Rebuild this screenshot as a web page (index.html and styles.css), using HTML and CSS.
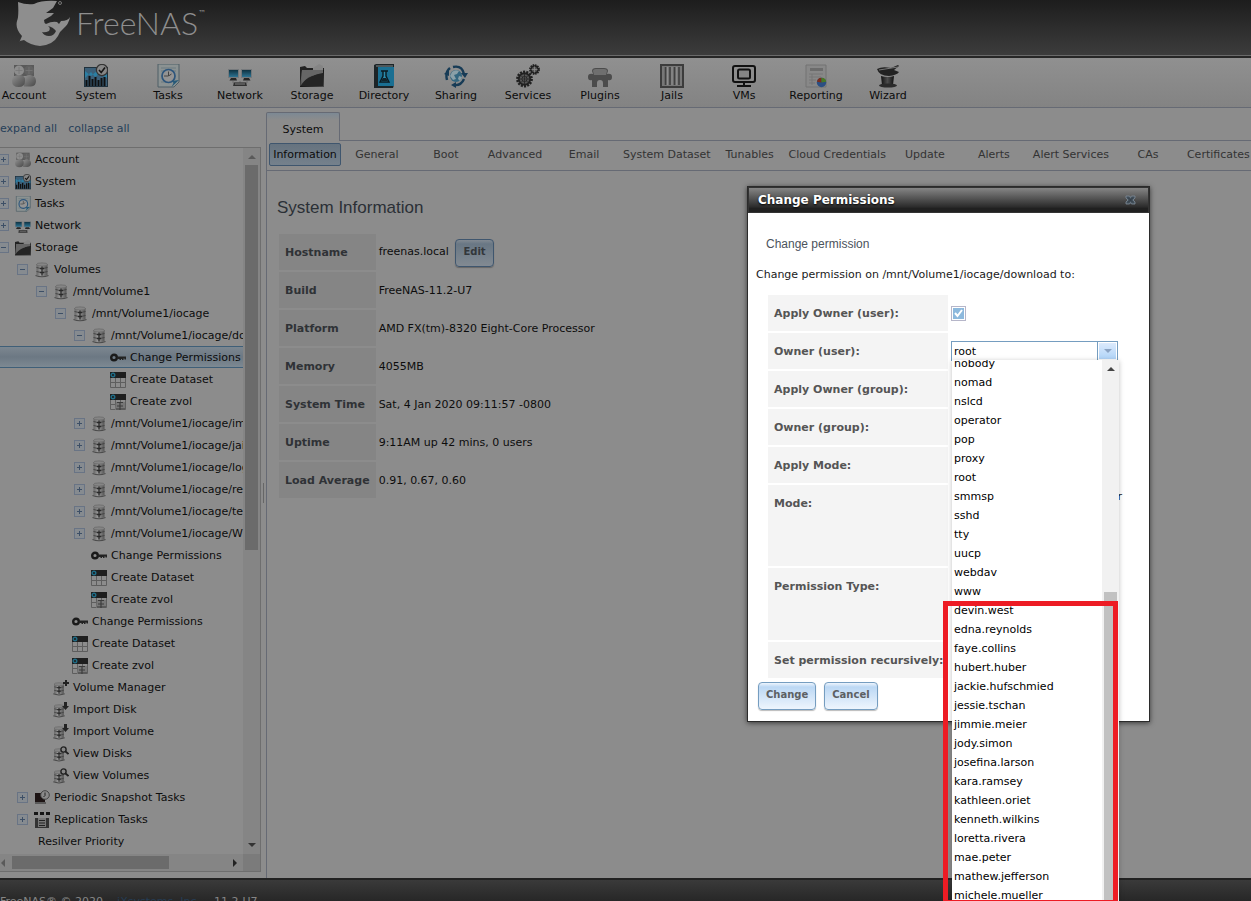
FILE: index.html
```html
<!DOCTYPE html>
<html lang="en">
<head>
<meta charset="utf-8">
<title>FreeNAS - System Information</title>
<link rel="stylesheet" href="styles.css">
</head>
<body>
<svg class="sprite" aria-hidden="true">
  <defs>
    <linearGradient id="g-blue" x1="0" y1="0" x2="0" y2="1"><stop offset="0" stop-color="#0e3242"/><stop offset="1" stop-color="#2c7392"/></linearGradient>
    <linearGradient id="g-folder" x1="0" y1="0" x2="1" y2="1"><stop offset="0" stop-color="#777"/><stop offset=".45" stop-color="#555"/><stop offset=".5" stop-color="#151515"/><stop offset="1" stop-color="#4b4b4b"/></linearGradient>
    <linearGradient id="g-hat" x1="0" y1="0" x2="1" y2="0"><stop offset="0" stop-color="#111"/><stop offset=".5" stop-color="#4c4c4c"/><stop offset="1" stop-color="#111"/></linearGradient>
    <linearGradient id="g-drum" x1="0" y1="0" x2="1" y2="0"><stop offset="0" stop-color="#666"/><stop offset=".4" stop-color="#9a9a9a"/><stop offset="1" stop-color="#555"/></linearGradient>
    <linearGradient id="g-person" x1="0" y1="0" x2="1" y2="1"><stop offset="0" stop-color="#919191"/><stop offset="1" stop-color="#484848"/></linearGradient>
  </defs>
  <symbol id="i-account" viewBox="0 0 24 24">
    <path d="M2 1h20v11H2z" fill="#5a5a5a"/>
    <circle cx="17" cy="6.500" r="5" fill="#626262"/><path d="M12 15q1-4 6-4 6 1 6 6 0 5-5 5.500h-7z" fill="url(#g-person)"/>
    <circle cx="7" cy="6.500" r="5" fill="#8d8d8d"/><path d="M0 17q0-6 7-6t6 6q0 6-6.500 6T0 17z" fill="url(#g-person)"/>
    <path d="M7 3v7M3.500 6.500h7M17 3v7M13.500 6.500h7" stroke="#777" stroke-width=".8"/>
  </symbol>
  <symbol id="i-system" viewBox="0 0 24 24">
    <path d="M0 3h24v20H0z" fill="#20313c"/><path d="M1 4h22v18H1z" fill="#3b5f78"/>
    <path d="M1 14l6-6 4 5 4-3 8 4V9L15 5 7 12 1 7z" fill="#2b7fa3"/>
    <path d="M2.500 22v-6M5.500 22v-10M8.500 22v-7M11.500 22v-9M14.500 22v-6M17.500 22v-8M20.500 22v-9" stroke="#101010" stroke-width="2"/>
    <circle cx="18" cy="6" r="5.600" fill="#868686" stroke="#333" stroke-width="1.200"/><path d="M15 6l2.200 2.500L21 3.500" fill="none" stroke="#161616" stroke-width="1.600"/>
  </symbol>
  <symbol id="i-tasks" viewBox="0 0 24 24">
    <path d="M2 0h21v18l-5 5H2z" fill="#8b9292" stroke="#4f5f66" stroke-width="1"/><path d="M5 4h15M5 18h8M5 7h3M17 7h3" stroke="#6d7a80" stroke-width="1"/>
    <circle cx="12.500" cy="12" r="6.500" fill="#939393" stroke="#2d557c" stroke-width="1.700"/><path d="M12.500 7.500V12l3-2M8 12h4" fill="none" stroke="#444" stroke-width="1"/>
    <path d="M23 16l-7 1 1.500 2-2 4z" fill="#285a78"/>
  </symbol>
  <symbol id="i-network" viewBox="0 0 24 24">
    <path d="M0 5h11v9H0zM13 5h11v9H13z" fill="#75797c"/><path d="M1 6h9v7H1zM14 6h9v7h-9z" fill="url(#g-blue)"/>
    <path d="M3 14h5l1 2.500H1.500zM16 14h5l1.500 2.500H15z" fill="#262626"/><path d="M5 17v2h14v-2M12 17v4" fill="none" stroke="#6c6c6c" stroke-width="1"/>
    <path d="M6 18.500h12l1 3.500H5z" fill="#303030"/><path d="M7 20h10" stroke="#808080"/>
  </symbol>
  <symbol id="i-storage" viewBox="0 0 24 24">
    <path d="M0 3l5-1 2 2h17v19H0z" fill="#222"/><path d="M13 4l6-4 4 2v5H13z" fill="#858585"/><path d="M2 6h22v17H0z" fill="url(#g-folder)"/><path d="M1 22Q5 12 23 9v13z" fill="#242424"/><path d="M2 6h21v3Q8 11 2 19z" fill="#666"/>
  </symbol>
  <symbol id="i-directory" viewBox="0 0 24 24">
    <path d="M2 1l2-1h18v21l-1 3H2z" fill="#1c2427"/><path d="M6 3h16v19H6z" fill="#1a6f92"/><path d="M4 2h17" stroke="#7e8a8e"/><path d="M9 7h7M11 7v5l-3 6h9l-3-6V7" fill="#2b8cae" stroke="#0c1a20" stroke-width="1.400"/><path d="M9 17l2-3h3l2 3z" fill="#10242c"/>
  </symbol>
  <symbol id="i-sharing" viewBox="0 0 24 24">
    <circle cx="12" cy="12" r="6" fill="#33667f"/><path d="M8 8q3-3 7-1l-2 3-3 1 2 4-3 1-3-4zM15 12l3 1-2 4-2-2z" fill="#8aa0a8"/>
    <path d="M9 3q9-2 11 7M20 15q-3 7-10 6M3 16Q1 8 6 4" fill="none" stroke="#173b56" stroke-width="2.400"/><path d="M17 9h7l-3 5zM12 18v6l-5-3zM0 10l5-4v6z" fill="#173b56"/>
  </symbol>
  <symbol id="i-services" viewBox="0 0 24 24">
    <circle cx="8.500" cy="15" r="7" fill="#555" stroke="#202020" stroke-width="2.800" stroke-dasharray="2 1.140"/><circle cx="8.500" cy="15" r="5.600" fill="none" stroke="#202020" stroke-width="1.600"/><circle cx="8.500" cy="15" r="2.500" fill="#8a8a8a" stroke="#222"/><path d="M8.500 10v10M3.500 15h10M5 11.500l7 7M12 11.500l-7 7" stroke="#282828" stroke-width=".9"/>
    <circle cx="18.500" cy="5.500" r="4.400" fill="#555" stroke="#202020" stroke-width="2" stroke-dasharray="1.500 .8"/><circle cx="18.500" cy="5.500" r="3.300" fill="#555" stroke="#202020" stroke-width="1.200"/><path d="M18.500 2.500v6M15.500 5.500h6" stroke="#8a8a8a" stroke-width=".8"/>
  </symbol>
  <symbol id="i-plugins" viewBox="0 0 24 24">
    <path d="M4 7q0-3 4-3h8q4 0 4 3l-1 3q5-1 5 3t-4 3v7h-5v-4q0-3-3-3t-3 3v4H4v-7q-4 1-4-3t5-3z" fill="#4c4c4c"/><path d="M5 7q0-2 3-2h8q3 0 3 2l-1 4H6z" fill="#6f6f6f"/>
  </symbol>
  <symbol id="i-jails" viewBox="0 0 24 24">
    <path d="M1 1h22v22H1z" fill="#777" stroke="#3c3c3c" stroke-width="2"/><path d="M5.500 3v18M10 3v18M14.500 3v18M19 3v18" stroke="#404040" stroke-width="1.600"/><path d="M7.500 3v18M12 3v18M16.700 3v18" stroke="#8f8f8f" stroke-width="1"/>
  </symbol>
  <symbol id="i-vms" viewBox="0 0 24 24">
    <rect x="1" y="2" width="22" height="16" rx="2" fill="none" stroke="#111" stroke-width="2"/><rect x="6" y="5.500" width="12" height="9" rx="1.500" fill="#858585" stroke="#111" stroke-width="2"/><path d="M12 18v3M5 22h14" stroke="#111" stroke-width="2"/>
  </symbol>
  <symbol id="i-reporting" viewBox="0 0 24 24">
    <path d="M2 1h20v22H2z" fill="#888" stroke="#727272"/><path d="M6 4h13v3H6z" fill="#6c6c6c"/><path d="M5 10h14M5 13h12M5 16h7M5 19h6M8 10v11" stroke="#777" stroke-width="1"/>
    <circle cx="17.500" cy="18.500" r="4.700" fill="#2b4f83"/><path d="M17.500 18.500v-4.700a4.700 4.700 0 0 0-4.500 4z" fill="#7c2d1c"/><path d="M17.500 18.500v-4.700a4.700 4.700 0 0 1 4.700 4z" fill="#4a7a24"/>
  </symbol>
  <symbol id="i-wizard" viewBox="0 0 24 24">
    <path d="M1 5q5-3 14-1l7-3 1 1-5 4 5 2q-2 3-10 4Q3 12 1 5z" fill="#222"/><path d="M3 6l19-3" stroke="#777" stroke-width="1"/><path d="M5 12q7 2 13 0l-1 9q-5 3-11 0z" fill="url(#g-hat)"/><ellipse cx="12" cy="21.500" rx="9" ry="2" fill="#2b2b2b"/>
  </symbol>
  <symbol id="i-vol" viewBox="0 0 16 16">
    <path d="M2.500 2v11q5.500 3 11 0V2z" fill="url(#g-drum)"/><ellipse cx="8" cy="2.500" rx="5.500" ry="1.600" fill="#858585" stroke="#666" stroke-width=".7"/>
    <path d="M2.500 5.500q5.500 2.500 11 0M2.500 9.500q5.500 2.500 11 0" fill="none" stroke="#454545" stroke-width="1"/><path d="M8 4.500v9M6 6.500h4M6 10.500h4" stroke="#2a2a2a" stroke-width="1.300"/><path d="M1.500 13.500q6.500 2.500 13 0" fill="none" stroke="#4a4a4a" stroke-width="1.200"/>
  </symbol>
  <symbol id="i-key" viewBox="0 0 16 16"><circle cx="4" cy="7.500" r="2.800" fill="none" stroke="#1a1a1a" stroke-width="2.400"/><path d="M7 6.500h9v3h-1.500v-1h-1V10H12V9h-1v1H9.500V9H7z" fill="#222"/></symbol>
  <symbol id="i-dataset" viewBox="0 0 16 16"><path d="M0 0h16v6H0z" fill="#1e1e1e"/><circle cx="3" cy="3" r="1.800" fill="none" stroke="#1f6c86" stroke-width="1.400"/><path d="M.5 6v9.500h15V6M5.500 6v9.500M10.500 6v9.500M0 10.500h16" fill="none" stroke="#5e5e5e" stroke-width="1"/></symbol>
  <symbol id="i-zvol" viewBox="0 0 16 16"><use href="#i-dataset"/><path d="M6 8h9v8H5z" fill="#777"/><path d="M7 8.500h6M7 12h6M6 15h9M10 8v8" stroke="#3c3c3c" stroke-width="1.200"/></symbol>
  <symbol id="i-volplus" viewBox="0 0 16 16"><use href="#i-vol" x="-1" y="2" width="14" height="14"/><path d="M13 0v6M10 3h6" stroke="#222" stroke-width="2"/></symbol>
  <symbol id="i-voldown" viewBox="0 0 16 16"><use href="#i-vol" x="-1" y="2" width="14" height="14"/><path d="M11 0h3v4h2l-3.500 4L9 4h2z" fill="#222"/></symbol>
  <symbol id="i-volfind" viewBox="0 0 16 16"><use href="#i-vol" x="-1" y="2" width="14" height="14"/><circle cx="10.500" cy="3.500" r="2.600" fill="#868686" stroke="#222" stroke-width="1.400"/><path d="M12.500 5.500L15.500 8" stroke="#222" stroke-width="1.800"/></symbol>
  <symbol id="i-snap" viewBox="0 0 16 16"><path d="M1 3h10v11H1z" fill="#1d1414"/><path d="M1 12h11v2H1z" fill="#5a5a5a"/><circle cx="11" cy="5" r="4.300" fill="#8a8a8a" stroke="#444" stroke-width="1"/><path d="M11 2.500V5.500L9.500 7" fill="none" stroke="#222"/></symbol>
  <symbol id="i-repl" viewBox="0 0 16 16"><path d="M0 0h4v3H0zM6 0h4v3H6zM12 0h4v3h-4z" fill="#161616"/><path d="M1 6h14v10H1z" fill="#333"/><path d="M4 6h8v9H4z" fill="#777"/><path d="M5 8.500h6M5 11h6M5 13.500h6" stroke="#222"/></symbol>
</svg>

<header class="masthead">
  <a class="brand" href="#">
    <svg class="brand-mark" viewBox="0 0 55 48" aria-hidden="true"><path fill-rule="evenodd" d="M2 2Q10 5 18 4Q26 0 41 1L37 8L30 13L38 13L35 16L28 20Q28 23 30 24Q36 21 41 22L43 24L45 21Q52 21 54 17Q53 24 47 29Q43 32 42 36Q37 45 24 46Q14 45 8 40L4 41L3 43L6 36Q-1 29 1 21Q3 17 2 2ZM26 32Q28 36 33 36Q38 36 40 31Q37 27 32 26Q35 28 33 31Q29 33 26 32Z" fill="#8e8e8e"/><circle cx="44" cy="3" r="1.500" fill="none" stroke="#777"/></svg>
    <span class="brand-name">FreeNAS</span><span class="brand-tm">™</span>
  </a>
</header>

<nav class="toolbar" aria-label="Main">
  <a href="#"><svg><use href="#i-account"/></svg>Account</a>
  <a href="#"><svg><use href="#i-system"/></svg>System</a>
  <a href="#"><svg><use href="#i-tasks"/></svg>Tasks</a>
  <a href="#"><svg><use href="#i-network"/></svg>Network</a>
  <a href="#"><svg><use href="#i-storage"/></svg>Storage</a>
  <a href="#"><svg><use href="#i-directory"/></svg>Directory</a>
  <a href="#"><svg><use href="#i-sharing"/></svg>Sharing</a>
  <a href="#"><svg><use href="#i-services"/></svg>Services</a>
  <a href="#"><svg><use href="#i-plugins"/></svg>Plugins</a>
  <a href="#"><svg><use href="#i-jails"/></svg>Jails</a>
  <a href="#"><svg><use href="#i-vms"/></svg>VMs</a>
  <a href="#"><svg><use href="#i-reporting"/></svg>Reporting</a>
  <a href="#"><svg><use href="#i-wizard"/></svg>Wizard</a>
</nav>

<div class="workspace">
  <aside class="sidebar">
    <div class="tree-actions"><a href="#">expand all</a><a href="#">collapse all</a></div>
    <div class="tree-box">
      <ul class="tree">
        <li class="l0"><button class="exp plus" aria-label="Expand"></button><svg><use href="#i-account"/></svg><a href="#">Account</a></li>
        <li class="l0"><button class="exp plus" aria-label="Expand"></button><svg><use href="#i-system"/></svg><a href="#">System</a></li>
        <li class="l0"><button class="exp plus" aria-label="Expand"></button><svg><use href="#i-tasks"/></svg><a href="#">Tasks</a></li>
        <li class="l0"><button class="exp plus" aria-label="Expand"></button><svg><use href="#i-network"/></svg><a href="#">Network</a></li>
        <li class="l0"><button class="exp" aria-label="Collapse"></button><svg><use href="#i-storage"/></svg><a href="#">Storage</a></li>
        <li class="l1"><button class="exp" aria-label="Collapse"></button><svg><use href="#i-vol"/></svg><a href="#">Volumes</a></li>
        <li class="l2"><button class="exp" aria-label="Collapse"></button><svg><use href="#i-vol"/></svg><a href="#">/mnt/Volume1</a></li>
        <li class="l3"><button class="exp" aria-label="Collapse"></button><svg><use href="#i-vol"/></svg><a href="#">/mnt/Volume1/iocage</a></li>
        <li class="l4"><button class="exp" aria-label="Collapse"></button><svg><use href="#i-vol"/></svg><a href="#">/mnt/Volume1/iocage/download</a></li>
        <li class="l5 leaf selected"><svg><use href="#i-key"/></svg><a href="#">Change Permissions</a></li>
        <li class="l5 leaf"><svg><use href="#i-dataset"/></svg><a href="#">Create Dataset</a></li>
        <li class="l5 leaf"><svg><use href="#i-zvol"/></svg><a href="#">Create zvol</a></li>
        <li class="l4"><button class="exp plus" aria-label="Expand"></button><svg><use href="#i-vol"/></svg><a href="#">/mnt/Volume1/iocage/images</a></li>
        <li class="l4"><button class="exp plus" aria-label="Expand"></button><svg><use href="#i-vol"/></svg><a href="#">/mnt/Volume1/iocage/jails</a></li>
        <li class="l4"><button class="exp plus" aria-label="Expand"></button><svg><use href="#i-vol"/></svg><a href="#">/mnt/Volume1/iocage/log</a></li>
        <li class="l4"><button class="exp plus" aria-label="Expand"></button><svg><use href="#i-vol"/></svg><a href="#">/mnt/Volume1/iocage/releases</a></li>
        <li class="l4"><button class="exp plus" aria-label="Expand"></button><svg><use href="#i-vol"/></svg><a href="#">/mnt/Volume1/iocage/templates</a></li>
        <li class="l4"><button class="exp plus" aria-label="Expand"></button><svg><use href="#i-vol"/></svg><a href="#">/mnt/Volume1/iocage/Windows</a></li>
        <li class="l4 leaf"><svg><use href="#i-key"/></svg><a href="#">Change Permissions</a></li>
        <li class="l4 leaf"><svg><use href="#i-dataset"/></svg><a href="#">Create Dataset</a></li>
        <li class="l4 leaf"><svg><use href="#i-zvol"/></svg><a href="#">Create zvol</a></li>
        <li class="l3 leaf"><svg><use href="#i-key"/></svg><a href="#">Change Permissions</a></li>
        <li class="l3 leaf"><svg><use href="#i-dataset"/></svg><a href="#">Create Dataset</a></li>
        <li class="l3 leaf"><svg><use href="#i-zvol"/></svg><a href="#">Create zvol</a></li>
        <li class="l2 leaf"><svg><use href="#i-volplus"/></svg><a href="#">Volume Manager</a></li>
        <li class="l2 leaf"><svg><use href="#i-voldown"/></svg><a href="#">Import Disk</a></li>
        <li class="l2 leaf"><svg><use href="#i-voldown"/></svg><a href="#">Import Volume</a></li>
        <li class="l2 leaf"><svg><use href="#i-volfind"/></svg><a href="#">View Disks</a></li>
        <li class="l2 leaf"><svg><use href="#i-volfind"/></svg><a href="#">View Volumes</a></li>
        <li class="l1"><button class="exp plus" aria-label="Expand"></button><svg><use href="#i-snap"/></svg><a href="#">Periodic Snapshot Tasks</a></li>
        <li class="l1"><button class="exp plus" aria-label="Expand"></button><svg><use href="#i-repl"/></svg><a href="#">Replication Tasks</a></li>
        <li class="l1 bare leaf"><a href="#">Resilver Priority</a></li>
      </ul>
      <div class="vbar"><i class="arrow up faint"></i><div class="vthumb"></div><i class="arrow down"></i></div>
      <div class="hbar"><i class="arrow left faint"></i><div class="htrack"><div class="hthumb"></div></div><i class="arrow right"></i></div>
      <div class="corner"></div>
    </div>
  </aside>
  <div class="splitter"><span></span></div>
  <main class="content">
    <div class="tabs"><button class="tab">System</button></div>
    <div class="subtabs">
      <button class="active">Information</button><button>General</button><button>Boot</button><button>Advanced</button><button>Email</button><button>System Dataset</button><button>Tunables</button><button>Cloud Credentials</button><button>Update</button><button>Alerts</button><button>Alert Services</button><button>CAs</button><button>Certificates</button>
    </div>
    <section class="pane">
      <h1>System Information</h1>
      <table class="facts">
        <tr><th scope="row">Hostname</th><td>freenas.local <button class="btn dim">Edit</button></td></tr>
        <tr><th scope="row">Build</th><td>FreeNAS-11.2-U7</td></tr>
        <tr><th scope="row">Platform</th><td>AMD FX(tm)-8320 Eight-Core Processor</td></tr>
        <tr><th scope="row">Memory</th><td>4055MB</td></tr>
        <tr><th scope="row">System Time</th><td>Sat, 4 Jan 2020 09:11:57 -0800</td></tr>
        <tr><th scope="row">Uptime</th><td>9:11AM up 42 mins, 0 users</td></tr>
        <tr><th scope="row">Load Average</th><td>0.91, 0.67, 0.60</td></tr>
      </table>
    </section>
  </main>
</div>

<footer class="footer"><span>FreeNAS® © 2020</span><a href="#">iXsystems, Inc.</a><span>11.2-U7</span></footer>

<div class="dialog" role="dialog" aria-labelledby="dlg-title">
  <div class="dialog-bar"><h2 id="dlg-title">Change Permissions</h2>
    <button class="close" aria-label="Close"><svg viewBox="0 0 11 10"><path d="M1 1h3.500l1 1.500 1-1.500H10v2L8 5l2 2v2H6.500l-1-1.500-1 1.500H1V7l2-2-2-2z" fill="#46535e" stroke="#7d8c98" stroke-width=".8"/><path d="M3 2.500l5 5M8 2.500l-5 5" stroke="#2b343c" stroke-width=".8"/></svg></button></div>
  <form class="dialog-body">
    <h3>Change permission</h3>
    <p>Change permission on /mnt/Volume1/iocage/download to:</p>
    <table class="facts form">
      <tr><th scope="row"><label for="apply-user">Apply Owner (user):</label></th><td><input type="checkbox" id="apply-user" checked></td></tr>
      <tr><th scope="row"><label for="owner">Owner (user):</label></th><td><div class="combo"><input type="text" id="owner" value="root"><button type="button" aria-label="Open list"><i class="arrow down"></i></button></div></td></tr>
      <tr><th scope="row">Apply Owner (group):</th><td></td></tr>
      <tr><th scope="row">Owner (group):</th><td></td></tr>
      <tr><th scope="row">Apply Mode:</th><td></td></tr>
      <tr class="mode"><th scope="row">Mode:</th><td class="mode-head">Other</td></tr>
      <tr class="ptype"><th scope="row">Permission Type:</th><td></td></tr>
      <tr><th scope="row">Set permission recursively:</th><td></td></tr>
    </table>
    <div class="dialog-actions"><button type="button" class="btn">Change</button><button type="button" class="btn">Cancel</button></div>
  </form>
</div>

<div class="popup">
  <ul role="listbox" aria-label="Owner (user)">
    <li>nobody</li><li>nomad</li><li>nslcd</li><li>operator</li><li>pop</li><li>proxy</li><li>root</li><li>smmsp</li><li>sshd</li><li>tty</li><li>uucp</li><li>webdav</li><li>www</li>
    <li>devin.west</li><li>edna.reynolds</li><li>faye.collins</li><li>hubert.huber</li><li>jackie.hufschmied</li><li>jessie.tschan</li><li>jimmie.meier</li><li>jody.simon</li><li>josefina.larson</li><li>kara.ramsey</li><li>kathleen.oriet</li><li>kenneth.wilkins</li><li>loretta.rivera</li><li>mae.peter</li><li>mathew.jefferson</li><li>michele.mueller</li>
  </ul>
  <div class="popup-bar"><i class="arrow up"></i><div class="popup-thumb"></div></div>
</div>
<div class="highlight"></div>
</body>
</html>
```
FILE: styles.css
```css
* { box-sizing: border-box; }
html, body { height: 100%; }
body {
  margin: 0;
  position: relative;
  display: flex;
  flex-direction: column;
  overflow: hidden;
  background: #8c8c8c;
  color: #0c0c0c;
  font: 11px/14px Verdana, "DejaVu Sans", sans-serif;
}
a { color: inherit; text-decoration: none; }
button, input { font: inherit; color: inherit; }
ul { list-style: none; margin: 0; padding: 0; }
h1, h2, h3, p { margin: 0; }
.sprite { position: absolute; width: 0; height: 0; }

/* masthead */
.masthead {
  flex: none;
  height: 58px;
  padding-left: 16px;
  background: linear-gradient(#1d1d1d, #3d3d3d);
  border-bottom: 2px solid #272727;
  box-shadow: inset 0 -1px #6a6a6a;
}
.brand { display: flex; color: #8e8e8e; }
.brand-mark { width: 55px; height: 48px; }
.brand-name { margin-left: 5px; font: 300 32px/46px Lato, sans-serif; }
.brand-tm { font-size: 8px; line-height: 28px; }

/* icon toolbar */
.toolbar {
  flex: none;
  display: flex;
  height: 50px;
  margin-left: -12px;
  padding-top: 6px;
  background: linear-gradient(#909090, #838383);
  border-bottom: 1px solid #666a74;
}
.toolbar a { display: flex; flex-direction: column; align-items: center; gap: 1px; width: 72px; }
.toolbar svg { width: 24px; height: 24px; }

/* workspace */
.workspace { flex: 1; min-height: 0; display: flex; }
.sidebar { flex: none; width: 261px; display: flex; flex-direction: column; padding-bottom: 6px; }
.tree-actions { display: flex; gap: 11px; padding: 14px 0 11px; color: #263f59; }
.tree-box {
  flex: 1;
  min-height: 0;
  display: grid;
  grid-template: minmax(0, 1fr) 17px / minmax(0, 1fr) 17px;
  border: 1px solid #6e6e6e;
  border-left: 0;
}
.tree { overflow: hidden; }
.tree li {
  display: flex;
  align-items: center;
  height: 22px;
  white-space: nowrap;
  border: solid transparent;
  border-width: 1px 0;
}
.tree a { padding-top: 2px; }
.tree svg { flex: none; width: 16px; height: 16px; margin: 2px 4px 0 6px; }
.tree .l0 { margin-left: -2px; }
.tree .l1 { padding-left: 17px; }
.tree .l2 { padding-left: 36px; }
.tree .l3 { padding-left: 55px; }
.tree .l4 { padding-left: 74px; }
.tree .l5 { padding-left: 93px; }
.tree .leaf::before { content: ""; flex: none; width: 11px; }
.tree .bare a { margin-left: 10px; }
.tree .selected { background: linear-gradient(#7c8790, #6c7883 50%, #7d8992); border-color: #3f5f78; }
.exp {
  flex: none;
  width: 11px;
  height: 11px;
  padding: 0;
  border: 1px solid #697485;
  background: linear-gradient(#3d4f66, #3d4f66) center / 5px 1px no-repeat, #868b90;
}
.exp.plus {
  background: linear-gradient(#3d4f66, #3d4f66) center / 5px 1px no-repeat, linear-gradient(#3d4f66, #3d4f66) center / 1px 5px no-repeat, #868b90;
}

.arrow { flex: none; width: 0; height: 0; border: 4px solid transparent; }
.arrow.up { border-top: 0; border-bottom-color: #444; }
.arrow.down { border-bottom: 0; border-top-color: #333; }
.arrow.left { border-left: 0; border-right-color: #333; }
.arrow.right { border-right: 0; border-left-color: #222; }
.arrow.up.faint { border-bottom-color: #5a5a5a; }
.arrow.left.faint { border-right-color: #5a5a5a; }
.vbar { display: flex; flex-direction: column; align-items: center; padding: 7px 0; background: #858585; }
.vthumb { width: 13px; height: 385px; margin: 6px 0 auto; background: #6b6b6b; }
.hbar { display: flex; align-items: center; padding: 0 6px 0 1px; background: #858585; }
.htrack { flex: 1; padding: 0 7px; }
.hthumb { width: 157px; height: 13px; background: #6b6b6b; }
.corner { background: #7b7b7b; }
.splitter { flex: none; width: 5px; display: flex; align-items: center; justify-content: center; }
.splitter span { width: 1px; height: 20px; background: #666; }

.content { flex: 1; min-width: 0; display: flex; flex-direction: column; margin-top: 4px; }
.tabs { display: flex; border-bottom: 1px solid #666a74; }
.tab {
  height: 29px;
  width: 74px;
  margin-bottom: -1px;
  padding: 6px 0 0;
  border: 1px solid #666a74;
  border-bottom: 0;
  border-radius: 2px 2px 0 0;
  background: linear-gradient(#7c8994, #8c8c8c 7px);
}
.subtabs {
  display: flex;
  gap: 3px;
  padding: 2px 0 4px 2px;
  border: solid #666a74;
  border-width: 0 0 1px 1px;
  color: #333;
}
.subtabs button {
  flex: none;
  min-width: 66px;
  height: 23px;
  padding: 0 2px;
  border: 1px solid transparent;
  border-radius: 2px;
  background: none;
}
.subtabs .active { width: 72px; color: #0c0c0c; border-color: #3f566e; background: linear-gradient(#66737f, #75818c); }
.pane { flex: 1; padding: 27px 10px 0; border-left: 1px solid #666a74; }
.pane h1 { font: 17px/20px Arial, "Liberation Sans", sans-serif; color: #2b3036; }

.facts { border-spacing: 2px; margin-top: 14px; }
.facts th {
  height: 36px;
  padding: 2px 6px 0;
  text-align: left;
  white-space: nowrap;
  background: #858585;
  color: #2f3236;
}
.facts td { padding: 2px 1px 0; }
.btn {
  height: 28px;
  padding: 0 7px 3px;
  border: 1px solid #759dc0;
  border-radius: 4px;
  background: linear-gradient(#eef5fd, #bcd8f4 4px, #eef5fd);
  box-shadow: 0 1px 1px #bbb;
  color: #5c6063;
  font-size: 10px;
  font-weight: bold;
}
.btn.dim {
  margin-left: 3px;
  border-color: #3f566e;
  background: linear-gradient(#828a92, #697784 4px, #828a92);
  box-shadow: 0 1px 1px #666;
  color: #33373b;
}

.footer {
  flex: none;
  display: flex;
  gap: 14px;
  height: 23px;
  padding-top: 15px;
  overflow: hidden;
  background: linear-gradient(#3a3a3a, #272727);
  border-top: 2px solid #222;
  color: #858585;
}
.footer a { color: #253c54; }

/* dialog */
.dialog {
  position: absolute;
  left: 747px;
  top: 186px;
  width: 403px;
  border: 1px solid #2b2b2b;
  background: #fff;
  box-shadow: 0 1px 5px rgba(0, 0, 0, .6);
}
.dialog-bar {
  display: flex;
  align-items: center;
  justify-content: space-between;
  height: 26px;
  padding: 0 12px 0 9px;
  background: linear-gradient(#858585, #2a2a2a 80%, #202020 84%);
  border: 1px solid #333;
}
.dialog-bar h2 { font-size: 12px; font-weight: bold; color: #fff; text-shadow: 0 1px 2px #000; }
.close { padding: 0; border: 0; background: none; }
.close svg { display: block; width: 11px; height: 10px; }
.dialog-body { padding: 23px 8px 11px; }
.dialog-body h3 { margin-left: 10px; font: 12px/16px Arial, "Liberation Sans", sans-serif; color: #4b535c; }
.dialog-body p { margin-top: 16px; color: #1a1a1a; }
.form { margin: 11px 0 0 10px; width: calc(100% - 20px); }
.form th { width: 180px; padding-right: 4px; background: #f4f4f4; color: #555; }
.form td { padding: 0; }
.form .mode th { height: 81px; }
.form .ptype th { height: 72px; }
.form .mode th, .form .ptype th, .mode-head { vertical-align: top; padding-top: 12px; }
.form .mode-head { padding: 5px 7px 0 0; text-align: right; }
.form input[type="checkbox"] {
  appearance: none;
  display: block;
  width: 15px;
  height: 15px;
  margin: 0 0 0 1px;
  border: 1px solid #b6b6c9;
  background: url('data:image/svg+xml,<svg xmlns="http://www.w3.org/2000/svg" viewBox="0 0 13 13"><path d="M1 1h11v11H1z" fill="%238db9dd"/><path d="M3 6l2.500 3L10 3" fill="none" stroke="white" stroke-width="2"/></svg>') #fff;
}
.combo { display: flex; width: 167px; height: 20px; margin-left: 1px; border: 1px solid #759dc0; background: #fff; }
.combo input { flex: 1; min-width: 0; padding: 1px 2px 0; border: 0; outline: 0; background: none; color: #000; }
.combo button { display: grid; place-items: center; width: 19px; padding: 0; border: 1px solid #fff; outline: 0; box-shadow: -1px 0 #759dc0; background: linear-gradient(#dceafc, #b0d4f8); }
.combo .arrow { border-top-color: #8ba3c3; }
.dialog-actions { display: flex; gap: 8px; margin: 2px 0 0 2px; }

/* open owner list */
.popup {
  position: absolute;
  left: 952px;
  top: 360px;
  bottom: 0;
  width: 167px;
  display: flex;
  overflow: hidden;
  background: #fff;
  box-shadow: 0 1px 5px rgba(0, 0, 0, .25);
  color: #000;
}
.popup ul { flex: 1; margin-top: -6px; }
.popup li { height: 19px; padding: 3px 2px 2px; white-space: nowrap; }
.popup-bar { display: flex; flex-direction: column; align-items: center; width: 17px; padding-top: 7px; background: #f1f1f1; }
.popup-thumb { flex: 1; width: 13px; margin-top: 221px; background: #c1c1c1; }
.highlight {
  position: absolute;
  left: 943px;
  top: 601px;
  bottom: -4px;
  width: 175px;
  border: 5px solid #ed1c24;
}
```
